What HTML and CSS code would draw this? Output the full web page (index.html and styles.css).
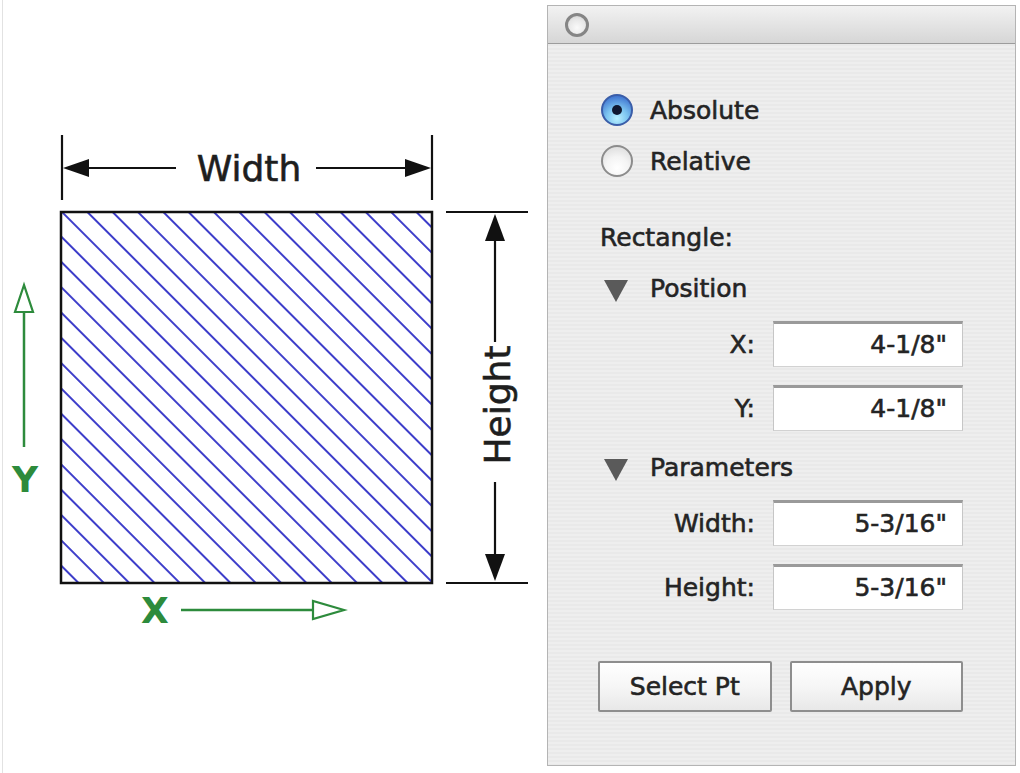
FILE: index.html
```html
<!DOCTYPE html>
<html>
<head>
<meta charset="utf-8">
<link rel="stylesheet" href="styles.css">
</head>
<body>
<div class="page">
  <div class="canvas">
    <svg class="diagram" width="547" height="773" viewBox="0 0 547 773">
      <defs>
        <pattern id="hatch" patternUnits="userSpaceOnUse" width="17.9" height="20" patternTransform="translate(62 212) rotate(-45)">
          <line x1="0" y1="0" x2="0" y2="20" stroke="#3434c8" stroke-width="1.9"/>
          <line x1="17.9" y1="0" x2="17.9" y2="20" stroke="#3434c8" stroke-width="1.9"/>
        </pattern>
      </defs>
      <line x1="2.5" y1="0" x2="2.5" y2="773" stroke="#e2e2e2" stroke-width="1"/>
      <!-- width dimension -->
      <g stroke="#111" stroke-width="2.2">
        <line x1="62" y1="135" x2="62" y2="200"/>
        <line x1="432" y1="135" x2="432" y2="200"/>
        <line x1="80" y1="168" x2="176" y2="168"/>
        <line x1="316" y1="168" x2="414" y2="168"/>
      </g>
      <polygon points="63,168 89,159 89,177" fill="#111"/>
      <polygon points="431,168 405,159 405,177" fill="#111"/>
      <text class="dim" x="249" y="181" text-anchor="middle">Width</text>
      <!-- rectangle -->
      <rect x="61" y="212" width="371" height="371" fill="url(#hatch)" stroke="#111" stroke-width="2.5"/>
      <!-- height dimension -->
      <g stroke="#111" stroke-width="2.2">
        <line x1="446" y1="212" x2="528" y2="212"/>
        <line x1="446" y1="583" x2="528" y2="583"/>
        <line x1="495" y1="232" x2="495" y2="342"/>
        <line x1="495" y1="482" x2="495" y2="564"/>
      </g>
      <polygon points="495,214 485,241 505,241" fill="#111"/>
      <polygon points="495,581 485,554 505,554" fill="#111"/>
      <text class="dim" transform="translate(510 405) rotate(-90)" x="0" y="0" text-anchor="middle">Height</text>
      <!-- Y axis -->
      <line x1="24" y1="312" x2="24" y2="447" stroke="#2d8b3c" stroke-width="2.5"/>
      <polygon points="24,285 15,312 33,312" fill="#fff" stroke="#2d8b3c" stroke-width="2.2" stroke-linejoin="miter"/>
      <text class="axis" x="25" y="492" text-anchor="middle">Y</text>
      <!-- X axis -->
      <line x1="181" y1="610" x2="313" y2="610" stroke="#2d8b3c" stroke-width="2.5"/>
      <polygon points="344,610 313,601 313,619" fill="#fff" stroke="#2d8b3c" stroke-width="2.2"/>
      <text class="axis" x="155" y="623" text-anchor="middle">X</text>
    </svg>
  </div>

  <div class="panel">
    <div class="titlebar"><span class="close"></span></div>
    <div class="body">
      <div class="radio-row first"><span class="radio on"></span><span>Absolute</span></div>
      <div class="radio-row"><span class="radio"></span><span>Relative</span></div>

      <div class="heading">Rectangle:</div>

      <div class="disclosure"><span class="tri"></span><span>Position</span></div>
      <div class="fields">
        <span class="lbl">X:</span><span class="field">4-1/8"</span>
        <span class="lbl">Y:</span><span class="field">4-1/8"</span>
      </div>

      <div class="disclosure second"><span class="tri"></span><span>Parameters</span></div>
      <div class="fields">
        <span class="lbl">Width:</span><span class="field">5-3/16"</span>
        <span class="lbl">Height:</span><span class="field">5-3/16"</span>
      </div>

      <div class="buttons">
        <span class="btn">Select Pt</span>
        <span class="btn">Apply</span>
      </div>
    </div>
  </div>
</div>
</body>
</html>
```

FILE: styles.css
```css
html, body {
  margin: 0;
  padding: 0;
  background: #ffffff;
}

.page {
  display: flex;
  width: 1020px;
  height: 773px;
  overflow: hidden;
  font-family: "DejaVu Sans", "Liberation Sans", sans-serif;
}

.canvas {
  width: 547px;
  flex: none;
}

.diagram {
  display: block;
}

.dim {
  font-family: "DejaVu Sans", sans-serif;
  font-size: 36px;
  fill: #1e1e1e;
  stroke: #1e1e1e;
  stroke-width: 0.6px;
}

.axis {
  font-family: "DejaVu Sans", sans-serif;
  font-weight: bold;
  font-size: 36px;
  fill: #2d8b3c;
}

.panel {
  width: 467px;
  height: 759px;
  margin-top: 5px;
  border: 1px solid #b4b4b4;
  display: flex;
  flex-direction: column;
  background: repeating-linear-gradient(to bottom, #eeeeee 0, #eeeeee 2px, #e9e9e9 2px, #e9e9e9 4px);
  color: #242424;
  font-size: 25px;
  -webkit-text-stroke: 0.6px #242424;
}

.titlebar {
  height: 37px;
  flex: none;
  border-bottom: 1px solid #9c9c9c;
  background: linear-gradient(to bottom, #f2f2f2 0%, #e4e4e4 50%, #d6d6d6 100%);
  display: flex;
  align-items: center;
  padding-left: 17px;
}

.close {
  width: 18px;
  height: 18px;
  border-radius: 50%;
  border: 3px solid #858585;
  background: radial-gradient(circle at 50% 65%, #fafafa 0%, #e6e6e6 60%, #c8c8c8 100%);
}

.body {
  padding: 0 52px;
  display: flex;
  flex-direction: column;
}

.radio-row {
  height: 32px;
  display: flex;
  align-items: center;
  gap: 17px;
  margin-top: 19px;
  margin-left: 1px;
}

.radio-row.first {
  margin-top: 50px;
}

.radio {
  width: 28px;
  height: 28px;
  border-radius: 50%;
  border: 2px solid #8c8c8c;
  background: radial-gradient(circle at 50% 75%, #ffffff 0%, #f4f4f4 45%, #d6d6d6 100%);
  display: flex;
  align-items: center;
  justify-content: center;
}

.radio.on {
  border-color: #3a5da8;
  background: radial-gradient(circle at 50% 80%, #b8f0ff 0%, #7cc4f0 40%, #3f74d0 85%, #2c4f9c 100%);
}

.radio.on::after {
  content: "";
  width: 10px;
  height: 10px;
  border-radius: 50%;
  background: #101830;
}

.heading {
  height: 32px;
  line-height: 32px;
  margin-top: 45px;
}

.disclosure {
  height: 32px;
  display: flex;
  align-items: center;
  margin-top: 18px;
}

.disclosure.second {
  margin-top: 20px;
}

.tri {
  width: 0;
  height: 0;
  border-left: 12px solid transparent;
  border-right: 12px solid transparent;
  border-top: 22px solid #5a5a5a;
  margin-left: 4px;
  margin-right: 22px;
  margin-top: 6px;
}

.fields {
  display: grid;
  grid-template-columns: 1fr 190px;
  column-gap: 18px;
  row-gap: 18px;
  margin-top: 17px;
  align-items: center;
}

.lbl {
  text-align: right;
}

.field {
  box-sizing: border-box;
  height: 46px;
  background: #ffffff;
  border-top: 3px solid #9a9a9a;
  border-left: 1px solid #c6c6c6;
  border-right: 1px solid #c6c6c6;
  border-bottom: 1px solid #d2d2d2;
  text-align: right;
  padding-right: 15px;
  line-height: 42px;
}

.buttons {
  display: flex;
  gap: 18px;
  margin-top: 51px;
  margin-left: -2px;
}

.btn {
  box-sizing: border-box;
  width: 174px;
  height: 51px;
  border: 2px solid #8e8e8e;
  border-radius: 2px;
  background: linear-gradient(to bottom, #ffffff 0%, #f6f6f6 50%, #e8e8e8 100%);
  display: flex;
  align-items: center;
  justify-content: center;
}
```
